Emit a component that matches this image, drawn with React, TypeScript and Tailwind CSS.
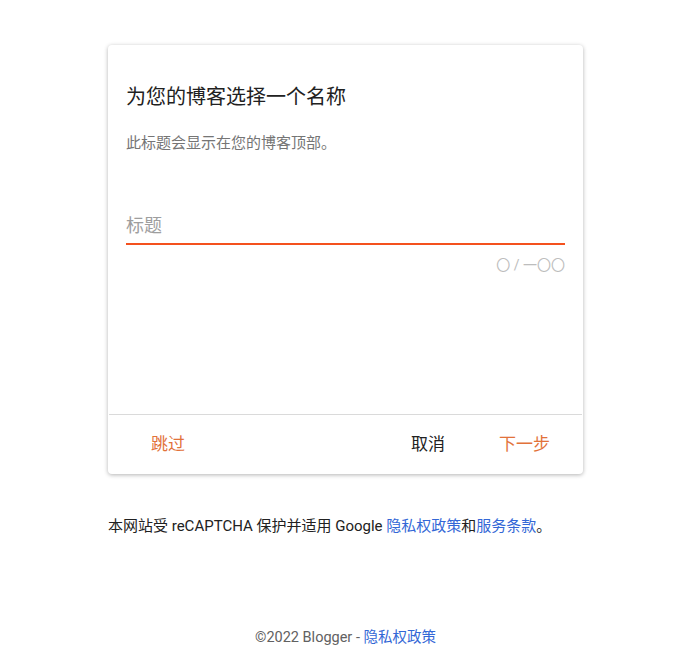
import React from "react";

const font = "font-['Roboto','Noto_Sans_CJK_SC',sans-serif]";

const App: React.FC = () => {
  return (
    <div className={`min-h-screen bg-white ${font} flex flex-col items-center pl-[4px]`}>
      <div className="w-[475px] mt-[45px]">
        {/* Card */}
        <div className="bg-white rounded-[4px] shadow-[0_1px_4px_rgba(0,0,0,0.3)] flex flex-col h-[429px]">
          <div className="px-[18px] pt-[37px] flex-1">
            <h1 className="text-[20px] leading-[30px] text-[#212121]">为您的博客选择一个名称</h1>
            <p className="mt-[20px] text-[15px] leading-[22px] text-[#757575]">此标题会显示在您的博客顶部。</p>
            <div className="mt-[59px]">
              <div className="text-[18px] leading-[26px] text-[#9e9e9e] pb-[4px] border-b-2 border-[#f4511e]">标题</div>
              <div className="mt-[11px] text-right text-[14px] leading-[18px] text-[#bdbdbd]">〇 / 一〇〇</div>
            </div>
          </div>
          <div className="border-t border-[#dadada] mx-px h-[60px] flex items-center pl-[24px] pr-[18px] text-[17px]">
            <button className="px-[18px] h-[36px] text-[#e2723a]">跳过</button>
            <div className="flex-1" />
            <button className="px-[16px] h-[36px] text-[#212121]">取消</button>
            <button className="ml-[24px] px-[14px] h-[36px] text-[#e2723a]">下一步</button>
          </div>
        </div>

        <p className="mt-[41px] text-[15px] leading-[22px] text-[#212121]">
          本网站受 reCAPTCHA 保护并适用 Google <a href="#" className="text-[#3367d6]">隐私权政策</a>和<a href="#" className="text-[#3367d6]">服务条款</a>。
        </p>
      </div>
      <div className="mt-[91px] text-[14.5px] leading-[20px] text-[#616161]">
        ©2022 Blogger - <a href="#" className="text-[#3367d6]">隐私权政策</a>
      </div>
    </div>
  );
};

export default App;
